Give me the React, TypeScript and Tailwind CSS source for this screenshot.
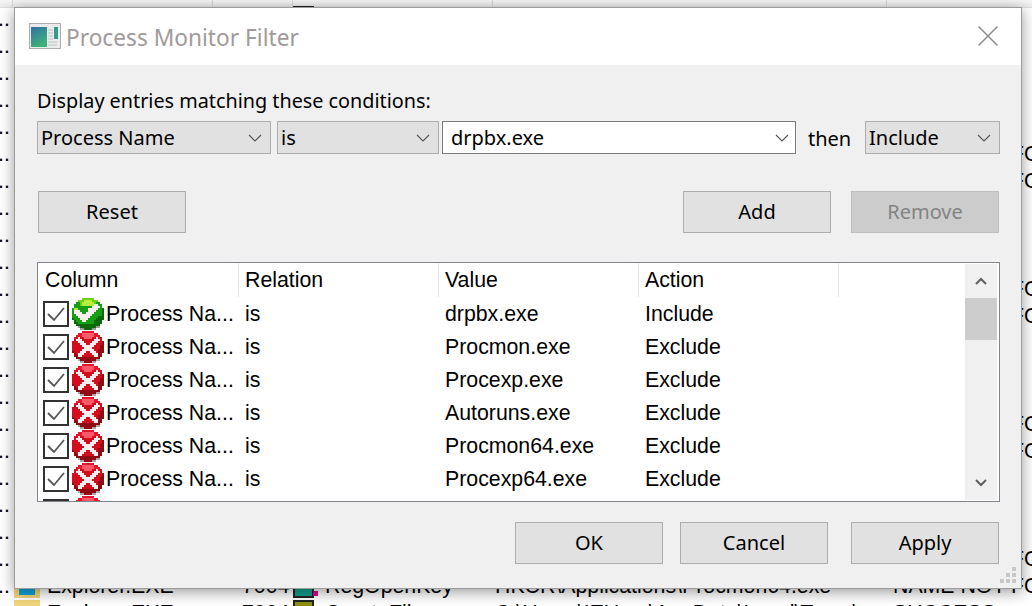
import { Fragment } from 'react';

const font = 'font-["Noto_Sans",sans-serif]';
const listFont = 'font-["Liberation_Sans",sans-serif] text-[21.3px] leading-none text-black';

const palette: Record<string, string> = {
  p: '#e8162c',
  L: '#ff5a6a',
  r: '#d40d1e',
  W: '#f4eeee',
  d: '#8f0a12',
  g: '#a8a8a8',
  l: '#6fd018',
  M: '#b6ee3c',
  G: '#169f12',
  D: '#0a6a0a',
  s: '#9a9a9a',
};

const redSprite = [
  '.....pppppp.....',
  '...ppLLLLLLpp...',
  '..pppLLLLLLppp..',
  '.prWrrLLLLrrWrr.',
  '.rWWWrrrrrrWWWr.',
  'rrrWWWrrrrWWWrrd',
  'rrrrWWWrrWWWrrrd',
  'rrrrrWWWWWWrrrdd',
  'rrrrrrWWWWrrrrdd',
  'rrrrrWWWWWWrrddd',
  'drrrWWWrrWWWrddd',
  '.drWWWrrrrWWWdd.',
  '.ddWWrrrrrrWWdd.',
  '..dddddddddddd..',
  '...gddddddddgg..',
  '....ggddddgg....',
];

const greenSprite = [
  '.....llllll.....',
  '...lllMMMMlll...',
  '..GGlMMMMMMlGG..',
  '.GGGlMMMMMMWWGG.',
  '.GGGGGGGGGWWWWG.',
  'GMMGGGGGWWWWWGGD',
  'GWWWGGGGWWWWGGGD',
  'GWWWWGGWWWWGGGGD',
  'GGWWWWWWWWGGGGGD',
  'GGGWWWWWWGGGGDDD',
  'DGGGWWWWGGGGDDDD',
  '.DGGGWWGGGGDDDD.',
  '.DDGGGGGGGGDDDD.',
  '..DDDDDDDDDDDD..',
  '...sDDDDDDDDss..',
  '....ssDDDDss....',
];

function Sprite({ rows }: { rows: string[] }) {
  return (
    <svg viewBox="0 0 16 16" shapeRendering="crispEdges" className="w-8 h-8 shrink-0">
      {rows.map((row, y) => (
        <Fragment key={y}>
          {row.split('').map((c, x) =>
            c === '.' ? null : <rect key={x} x={x} y={y} width="1" height="1" fill={palette[c]} />
          )}
        </Fragment>
      ))}
    </svg>
  );
}

function Chevron({ className = '' }: { className?: string }) {
  return (
    <svg viewBox="0 0 14 8" className={`w-[14px] h-2 shrink-0 ${className}`} fill="none" stroke="#555" strokeWidth="1.1">
      <path d="M1 1l6 6 6-6" />
    </svg>
  );
}

function Combo({ text, width, white }: { text: string; width: string; white?: boolean }) {
  return (
    <div
      className={`${width} h-[33px] flex items-center justify-between border shrink-0 ${
        white ? 'bg-white border-[#7a7a7a] pl-2 pr-[6px]' : 'bg-[#e1e1e1] border-[#adadad] pl-[3px] pr-[8px]'
      }`}
    >
      <span className="text-[20px] leading-none text-black">{text}</span>
      <Chevron />
    </div>
  );
}

function Button({ label, disabled }: { label: string; disabled?: boolean }) {
  return (
    <button
      className={`w-[148px] h-[42px] border text-[20px] leading-none ${font} ${
        disabled ? 'bg-[#cccccc] border-[#bfbfbf] text-[#838383]' : 'bg-[#e1e1e1] border-[#adadad] text-black'
      }`}
    >
      {label}
    </button>
  );
}

const filters = [
  ['drpbx.exe', 'Include'],
  ['Procmon.exe', 'Exclude'],
  ['Procexp.exe', 'Exclude'],
  ['Autoruns.exe', 'Exclude'],
  ['Procmon64.exe', 'Exclude'],
  ['Procexp64.exe', 'Exclude'],
  ['Procmon.exe', 'Exclude'],
];

function FilterRow({ value, action }: { value: string; action: string }) {
  return (
    <div className={`flex items-center h-[33px] shrink-0 ${listFont}`}>
      <div className="w-[201px] flex items-center pl-[5px] shrink-0">
        <div className="w-[26px] h-[26px] border-2 border-[#333333] bg-white flex items-center justify-center shrink-0">
          <svg viewBox="0 0 22 22" className="w-[22px] h-[22px]" fill="none" stroke="#555" strokeWidth="1.8">
            <path d="M3 11l6 6L19 5" />
          </svg>
        </div>
        <div className="ml-[3px] -mt-[1px] -mb-[1px]">
          <Sprite rows={action === 'Include' ? greenSprite : redSprite} />
        </div>
        <span className="ml-[2px] pt-[2px] whitespace-nowrap">Process Na...</span>
      </div>
      <div className="w-[200px] pl-[6px] pt-[2px] shrink-0">is</div>
      <div className="w-[200px] pl-[6px] pt-[2px] shrink-0">{value}</div>
      <div className="w-[200px] pl-[6px] pt-[2px] shrink-0">{action}</div>
    </div>
  );
}

function BackRow({ i }: { i: number }) {
  const notFound = [5, 6, 10, 11, 15, 16, 20, 21].includes(i);
  const last = i === 22;
  const folder = i >= 2;
  const yellowIcon = i === 0 || last;
  return (
    <div className={`flex items-center h-[27px] shrink-0 whitespace-nowrap ${listFont}`}>
      <div className="w-[14px] shrink-0 overflow-hidden -ml-[2px] mr-[2px]">..</div>
      <div className={`w-[26px] h-[25px] -mt-[3px] shrink-0 relative ${folder ? 'bg-[#f2d67c]' : ''}`}>
        {folder ? (
          <div className="absolute left-[5px] right-[5px] top-[6px] bottom-[3px] bg-[#12a5dc]" />
        ) : (
          <div className="absolute left-[8px] right-[5px] top-[2px] h-[21px] bg-[#a8a8a8]" />
        )}
      </div>
      <div className="w-[202px] pl-[7px] shrink-0">Explorer.EXE</div>
      <div className="w-[51px] shrink-0">7004</div>
      <div
        className={`w-[21px] h-[25px] -mt-[3px] shrink-0 mr-[7px] relative border-2 border-[#222] ${
          yellowIcon ? 'bg-[#8f8f10]' : 'bg-[#12a08e]'
        }`}
      >
        {!yellowIcon && <div className="absolute -right-[6px] bottom-0 w-[5px] h-[5px] bg-[#e0008c]" />}
      </div>
      <div className="w-[174px] pl-[4px] shrink-0">{last ? 'CreateFile' : 'RegOpenKey'}</div>
      <div className="w-[398px] shrink-0 overflow-hidden">
        {last ? 'C:\\Users\\IEUser\\AppData\\Local\\Temp\\' : 'HKCR\\Applications\\Procmon64.exe'}
      </div>
      <div>{notFound ? 'NAME NOT FOUND' : 'SUCCESS'}</div>
    </div>
  );
}

export default function App() {
  return (
    <div className={`relative w-[1032px] h-[606px] overflow-hidden bg-white ${font}`}>
      {/* procmon window behind the dialog */}
      <div className="flex h-[8px] bg-gradient-to-b from-[#f6f6f6] to-[#ececec] border-b border-[#dddddd]">
        <div className="w-[13px] border-r border-[#d8d8d8]" />
        <div className="w-[200px] border-r border-[#d8d8d8]" />
        <div className="w-[80px] border-r border-[#d8d8d8]" />
        <div className="w-[200px] border-r border-[#d8d8d8]" />
        <div className="w-[394px] border-r border-[#d8d8d8]" />
      </div>
      <div className="flex flex-col -mt-[2px]">
        {Array.from({ length: 23 }, (_, i) => (
          <BackRow key={i} i={i} />
        ))}
      </div>

      {/* filter dialog */}
      <div className="absolute left-[14px] top-[7px] w-[1008px] h-[582px] border border-[#9c9c9c] bg-[#f0f0f0] shadow-[0_3px_14px_rgba(0,0,0,0.4)] flex flex-col">
        <div className="h-[57px] bg-white flex items-center shrink-0 pl-[14px] pr-[23px]">
          <svg viewBox="0 0 32 26" className="w-8 h-[26px] shrink-0 -mt-[2px]">
            <defs>
              <linearGradient id="pane" x1="0" y1="0" x2="0.5" y2="1">
                <stop offset="0" stopColor="#2f6fa8" />
                <stop offset="1" stopColor="#3fb277" />
              </linearGradient>
            </defs>
            <rect x="0.5" y="0.5" width="31" height="25" fill="#e9ecea" stroke="#a9adab" />
            <rect x="2" y="4" width="16" height="20" fill="url(#pane)" />
            <rect x="25" y="4" width="4" height="12" fill="#2f9c8e" />
            <path d="M19 7h5M19 10h5M19 13h5M19 16h5M19 19h9M19 22h9" stroke="#bcc2bf" strokeWidth="1.2" />
          </svg>
          <span className="ml-[5px] mt-[4px] text-[22.7px] leading-none text-[#9f9a9a] whitespace-nowrap">Process Monitor Filter</span>
          <svg viewBox="0 0 20 20" className="ml-auto w-5 h-5 shrink-0 -mt-[1px]" fill="none" stroke="#8c8c8c" strokeWidth="1.5">
            <path d="M0.5 0.5l19 19M19.5 0.5l-19 19" />
          </svg>
        </div>

        <div className="flex-1 pt-6 pl-[22px] pr-[21px] relative">
          <div className="h-6 mb-2 flex items-center text-[19.8px] leading-none text-black whitespace-nowrap">
            Display entries matching these conditions:
          </div>
          <div className="flex items-center">
            <Combo text="Process Name" width="w-[234px]" />
            <div className="w-[6px] shrink-0" />
            <Combo text="is" width="w-[162px]" />
            <div className="w-[3px] shrink-0" />
            <Combo text="drpbx.exe" width="w-[354px]" white />
            <div className="w-[69px] shrink-0 pl-3 pt-[3px] text-[20px] leading-none text-black">then</div>
            <Combo text="Include" width="w-[135px]" />
          </div>

          <div className="flex justify-between mt-[37px] pl-px pr-px">
            <Button label="Reset" />
            <div className="flex gap-5">
              <Button label="Add" />
              <Button label="Remove" disabled />
            </div>
          </div>

          <div className="mt-[29px] h-[240px] border border-[#82878f] bg-white flex overflow-hidden">
            <div className="flex-1 flex flex-col overflow-hidden">
              <div className={`flex h-[34px] shrink-0 ${listFont}`}>
                <div className="w-[201px] pl-[7px] pt-[2px] flex items-center border-r border-[#e5e5e5] shrink-0">Column</div>
                <div className="w-[200px] pl-[6px] pt-[2px] flex items-center border-r border-[#e5e5e5] shrink-0">Relation</div>
                <div className="w-[200px] pl-[6px] pt-[2px] flex items-center border-r border-[#e5e5e5] shrink-0">Value</div>
                <div className="w-[200px] pl-[6px] pt-[2px] flex items-center border-r border-[#e5e5e5] shrink-0">Action</div>
              </div>
              {filters.map(([value, action], i) => (
                <FilterRow key={i} value={value} action={action} />
              ))}
            </div>
            <div className="w-8 my-px mr-[2px] bg-[#f0f0f0] flex flex-col items-center shrink-0">
              <div className="h-[34px] flex items-center justify-center shrink-0">
                <svg viewBox="0 0 12 8" className="w-3 h-2" fill="none" stroke="#606060" strokeWidth="2">
                  <path d="M1 7l5-5 5 5" />
                </svg>
              </div>
              <div className="w-full h-[42px] bg-[#cdcdcd] shrink-0" />
              <div className="flex-1" />
              <div className="h-[34px] flex items-center justify-center shrink-0">
                <svg viewBox="0 0 12 8" className="w-3 h-2" fill="none" stroke="#606060" strokeWidth="2">
                  <path d="M1 1l5 5 5-5" />
                </svg>
              </div>
            </div>
          </div>

          <div className="flex justify-end mt-5 pr-px">
            <Button label="OK" />
            <div className="w-[17px]" />
            <Button label="Cancel" />
            <div className="w-[23px]" />
            <Button label="Apply" />
          </div>

          {/* size grip */}
          <svg viewBox="0 0 17 17" className="absolute right-[4px] bottom-[4px] w-[17px] h-[17px]" fill="#c8c8c8">
            <rect x="12" y="0" width="4" height="4" />
            <rect x="6" y="6" width="4" height="4" />
            <rect x="12" y="6" width="4" height="4" />
            <rect x="0" y="12" width="4" height="4" />
            <rect x="6" y="12" width="4" height="4" />
            <rect x="12" y="12" width="4" height="4" />
          </svg>
        </div>
      </div>
    </div>
  );
}
